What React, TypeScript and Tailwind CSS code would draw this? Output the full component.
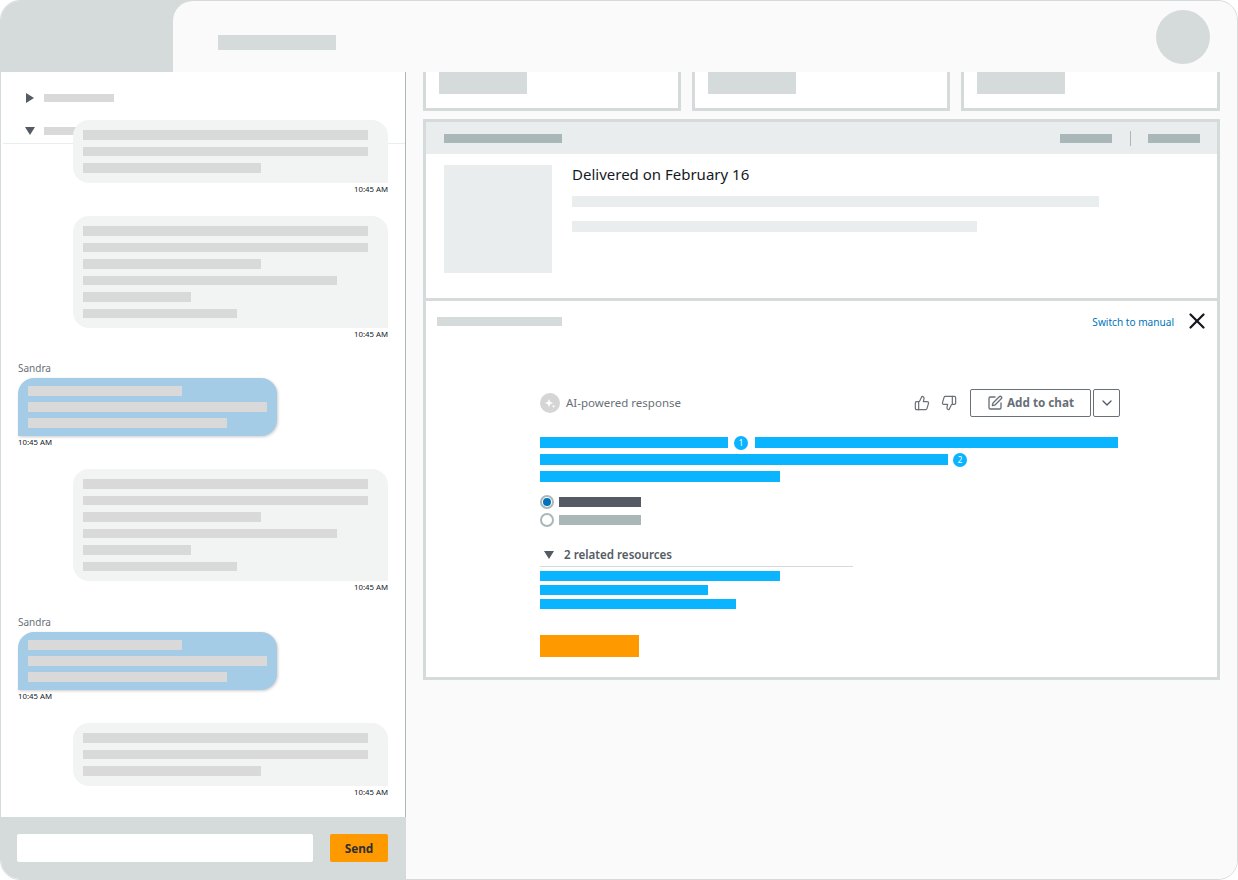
import { ChevronDown, SquarePen, ThumbsDown, ThumbsUp, X } from 'lucide-react';

const font = { fontFamily: '"Noto Sans", "Open Sans", Arial, sans-serif' };

function Caret({ open }: { open?: boolean }) {
  return (
    <svg width="12" height="12" viewBox="0 0 12 12" className="shrink-0">
      {open ? <path d="M1 2h10L6 10z" fill="#545b64" /> : <path d="M2 1v10l8-5z" fill="#545b64" />}
    </svg>
  );
}

function Time({ right }: { right?: boolean }) {
  return (
    <div className={`h-[13px] text-[7.8px] leading-[13px] text-[#16191f] ${right ? 'text-right' : ''}`}>10:45 AM</div>
  );
}

function AgentMessage({ lines, className }: { lines: string[]; className: string }) {
  return (
    <div className={`ml-auto w-[315px] ${className}`}>
      <div className="flex flex-col gap-[7px] rounded-[16px] rounded-br-none bg-[#f2f3f3] py-[10px] pl-[10px] pr-[20px]">
        {lines.map((w, i) => (
          <div key={i} className={`h-[9.5px] bg-[#d9d9d9] ${w}`} />
        ))}
      </div>
      <Time right />
    </div>
  );
}

function CustomerMessage() {
  return (
    <div className="mb-[20px] w-[259px]">
      <div className="h-[17px] text-[10px] leading-[14px] text-[#687078]">Sandra</div>
      <div className="flex h-[58px] flex-col gap-[6.6px] rounded-[16px] rounded-bl-none bg-[#a4cce6] py-[8px] pl-[10px] shadow-[1px_1px_3px_rgba(0,0,0,0.2)]">
        <div className="h-[9.5px] w-[154px] bg-[#d9d9d9]" />
        <div className="h-[9.5px] w-[239px] bg-[#d9d9d9]" />
        <div className="h-[9.5px] w-[199px] bg-[#d9d9d9]" />
      </div>
      <Time />
    </div>
  );
}

function Badge({ n }: { n: number }) {
  return (
    <span className="flex h-[14px] w-[14px] shrink-0 items-center justify-center rounded-full bg-[#0ab4ff] text-[8px] leading-none text-white">
      {n}
    </span>
  );
}

const short = ['w-full', 'w-full', 'w-[178px]'];
const long = ['w-full', 'w-full', 'w-[178px]', 'w-[254px]', 'w-[108px]', 'w-[154px]'];

export default function App() {
  return (
    <div style={font} className="flex h-[880px] w-[1238px] flex-col overflow-hidden rounded-[20px] border border-[#d5dbdb] bg-white">
      {/* Top bar */}
      <div className="flex h-[71px] shrink-0 bg-[#d5dbdb]">
        <div className="w-[172px]" />
        <div className="flex flex-1 items-center justify-between rounded-tl-[20px] bg-[#fafafa] pl-[45px] pr-[27px]">
          <div className="mt-[12px] h-[15px] w-[118px] bg-[#d5dbdb]" />
          <div className="h-[54px] w-[54px] rounded-full bg-[#d5dbdb]" />
        </div>
      </div>

      <div className="flex min-h-0 flex-1">
        {/* Chat column */}
        <div className="flex w-[405px] shrink-0 flex-col border-r border-[#aab7b8] bg-white">
          <div className="min-h-0 flex-1 overflow-hidden">
            <div className="ml-[2px] h-[72px] border-b border-[#eaeded] pl-[21px] pt-[20px]">
              <div className="flex h-[12px] items-center gap-[8px]">
                <Caret />
                <div className="h-[8px] w-[70px] bg-[#d9d9d9]" />
              </div>
              <div className="mt-[21px] flex h-[12px] items-center gap-[8px]">
                <Caret open />
                <div className="h-[8px] w-[70px] bg-[#d9d9d9]" />
              </div>
            </div>
            <div className="relative -mt-[24px] px-[17px]">
              <AgentMessage lines={short} className="mb-[20.5px]" />
              <AgentMessage lines={long} className="mb-[20px]" />
              <CustomerMessage />
              <AgentMessage lines={long} className="mb-[21px]" />
              <CustomerMessage />
              <AgentMessage lines={short} className="mb-[20px]" />
            </div>
          </div>
          <div className="-mr-px flex h-[62px] shrink-0 items-center gap-[17px] bg-[#d5dbdb] pl-[16px] pr-[18px]">
            <div className="h-[28px] w-[296px] rounded-[2px] bg-white" />
            <div className="flex h-[28px] w-[58px] items-center justify-center rounded-[2px] bg-[#ff9900] pt-px text-[11.8px] font-bold text-[#2b2f36]">
              Send
            </div>
          </div>
        </div>

        {/* Case column */}
        <div className="min-w-0 flex-1 bg-[#fafafa] pl-[17px] pr-[17px]">
          <div className="flex gap-[11px]">
            {['w-[258px]', 'w-[258px]', 'flex-1'].map((w, i) => (
              <div key={i} className={`h-[39px] border-[3px] border-t-0 border-[#d5dbdb] bg-white pl-[13px] ${w}`}>
                <div className="h-[22px] w-[88px] bg-[#d5dbdb]" />
              </div>
            ))}
          </div>

          <div className="mt-[8px] border-[3px] border-[#d5dbdb] bg-white">
            <div className="flex h-[32px] items-center justify-between bg-[#eaeded] pl-[18px] pr-[17px]">
              <div className="h-[9px] w-[118px] bg-[#aab7b8]" />
              <div className="flex items-center gap-[17px]">
                <div className="mr-px h-[9px] w-[52px] bg-[#aab7b8]" />
                <div className="h-[15px] w-px bg-[#aab7b8]" />
                <div className="h-[9px] w-[52px] bg-[#aab7b8]" />
              </div>
            </div>
            <div className="flex h-[144px] gap-[20px] pl-[18px] pt-[11px]">
              <div className="h-[108px] w-[108px] bg-[#eaeded]" />
              <div>
                <div className="-mt-px h-[20px] text-[15px] font-normal leading-[20px] text-[#16191f]">Delivered on February 16</div>
                <div className="mt-[12px] h-[11px] w-[527px] bg-[#eaeded]" />
                <div className="mt-[14px] h-[11px] w-[405px] bg-[#eaeded]" />
              </div>
            </div>

            <div className="h-[379px] border-t-[3px] border-[#d5dbdb] pt-[11px]">
              <div className="flex h-[18px] items-center justify-between pl-[11px] pr-[7px]">
                <div className="h-[9px] w-[125px] bg-[#d5dbdb]" />
                <div className="flex items-center gap-[10px]">
                  <span className="mt-[4px] text-[10.1px] text-[#0073bb]">Switch to manual</span>
                  <X size={26} strokeWidth={2.1} className="text-[#16191f]" />
                </div>
              </div>

              <div className="ml-[114px] mt-[59px] w-[580px]">
                <div className="flex h-[28px] items-center">
                  <span className="flex h-[20px] w-[20px] items-center justify-center rounded-full bg-[#d5d5d5]">
                    <svg width="12" height="12" viewBox="0 0 12 12">
                      <path d="M5 2l1.2 2.8L9 6 6.2 7.2 5 10 3.8 7.2 1 6l2.8-1.2z" fill="#fff" />
                      <path d="M9.5 7.5l.5 1.2 1.2.5-1.2.5-.5 1.2-.5-1.2-1.2-.5 1.2-.5z" fill="#fff" />
                    </svg>
                  </span>
                  <span className="ml-[6px] text-[11.5px] text-[#687078]">AI-powered response</span>
                  <ThumbsUp size={16} strokeWidth={1.8} className="ml-auto text-[#687078]" />
                  <ThumbsDown size={16} strokeWidth={1.8} className="ml-[11px] text-[#687078]" />
                  <div className="ml-[13.5px] flex h-[28px] w-[121px] items-center justify-center gap-[4px] rounded-[2px] border border-[#687078] text-[11.7px] font-bold text-[#687078]">
                    <SquarePen size={16} strokeWidth={2} />
                    Add to chat
                  </div>
                  <div className="ml-[2px] flex h-[28px] w-[27px] items-center justify-center rounded-[2px] border border-[#687078] text-[#545b64]">
                    <ChevronDown size={16} />
                  </div>
                </div>

                <div className="mt-[20px] flex h-[11px] items-center">
                  <div className="h-[11px] w-[188px] bg-[#0ab4ff]" />
                  <span className="ml-[6px]"><Badge n={1} /></span>
                  <div className="ml-[7px] h-[11px] w-[363px] bg-[#0ab4ff]" />
                </div>
                <div className="mt-[6px] flex h-[11px] items-center">
                  <div className="h-[11px] w-[408px] bg-[#0ab4ff]" />
                  <span className="ml-[5px]"><Badge n={2} /></span>
                </div>
                <div className="mt-[6px] h-[11px] w-[240px] bg-[#0ab4ff]" />

                <div className="mt-[15px] flex h-[10px] items-center gap-[5px]">
                  <span className="flex h-[14px] w-[14px] items-center justify-center rounded-full border-2 border-[#aab7b8]">
                    <span className="h-[8px] w-[8px] rounded-full bg-[#0073bb]" />
                  </span>
                  <div className="h-[10px] w-[82px] bg-[#545b64]" />
                </div>
                <div className="mt-[8px] flex h-[10px] items-center gap-[5px]">
                  <span className="h-[14px] w-[14px] rounded-full border-2 border-[#aab7b8] bg-white" />
                  <div className="h-[10px] w-[82px] bg-[#aab7b8]" />
                </div>

                <div className="mt-[20px] flex h-[22px] w-[313px] items-center gap-[9px] border-b border-[#d5dbdb] pb-[2px] pl-[3px]">
                  <Caret open />
                  <span className="text-[11.6px] font-semibold text-[#545b64]">2 related resources</span>
                </div>
                <div className="mt-[4px] h-[10px] w-[240px] bg-[#0ab4ff]" />
                <div className="mt-[4px] h-[10px] w-[168px] bg-[#0ab4ff]" />
                <div className="mt-[4px] h-[10px] w-[196px] bg-[#0ab4ff]" />
                <div className="mt-[26px] h-[22px] w-[99px] bg-[#ff9900]" />
              </div>
            </div>
          </div>
        </div>
      </div>
    </div>
  );
}
